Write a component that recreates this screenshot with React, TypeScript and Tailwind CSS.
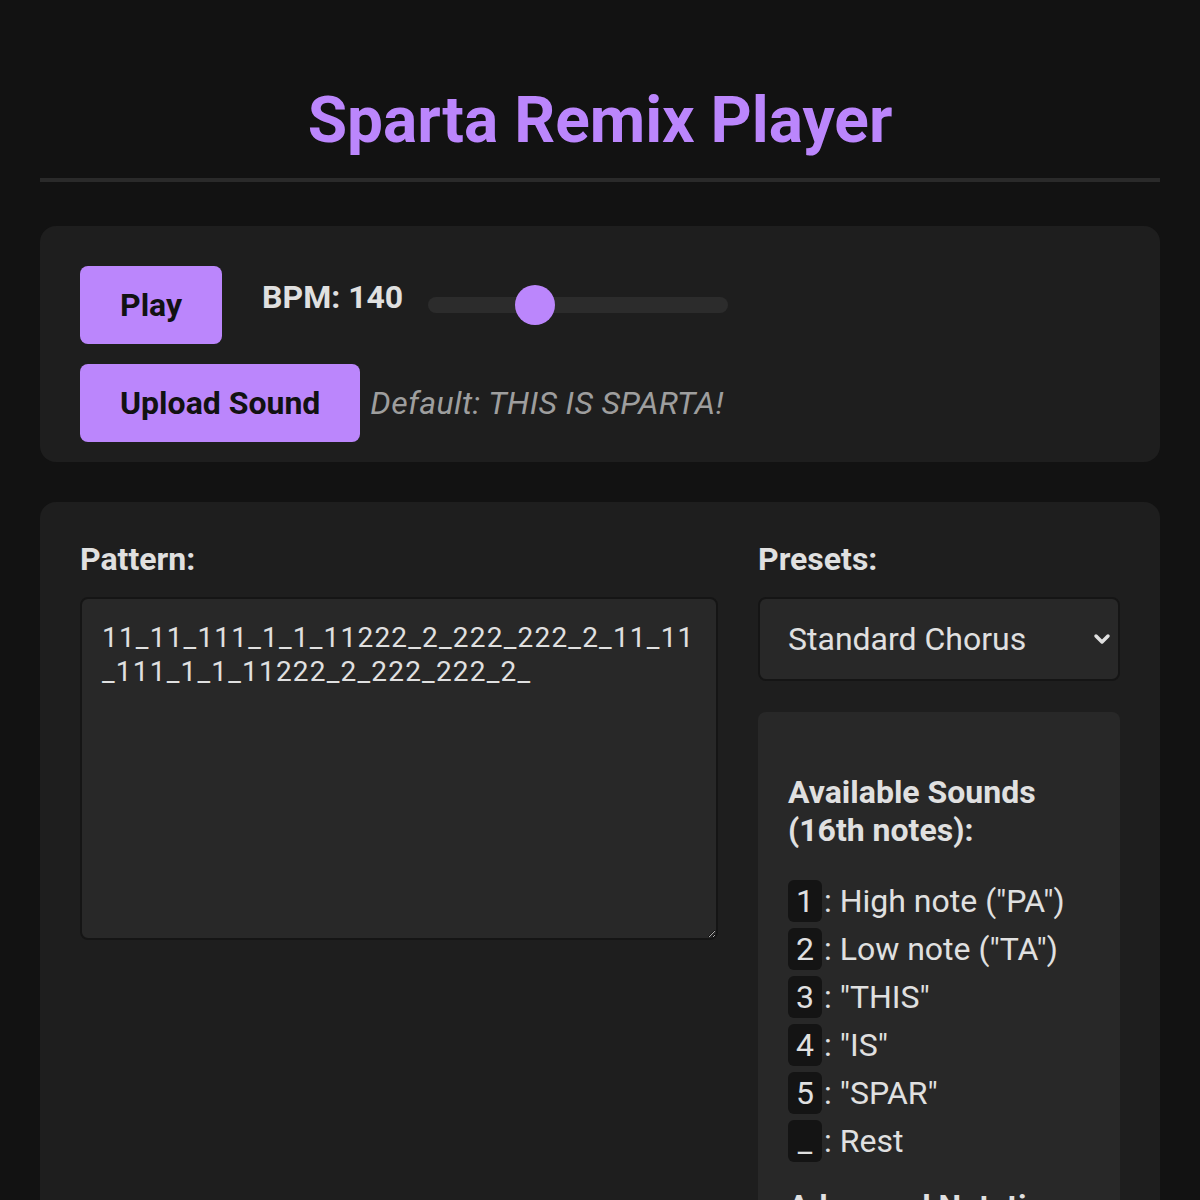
import { useState } from 'react';
import { ChevronDown } from 'lucide-react';

const presets = ['Standard Chorus', 'Classic Sparta', 'Double Time', 'Half Time'];

const sounds: [string, string][] = [
  ['1', 'High note ("PA")'],
  ['2', 'Low note ("TA")'],
  ['3', '"THIS"'],
  ['4', '"IS"'],
  ['5', '"SPAR"'],
  ['_', 'Rest'],
];

export default function App() {
  const [bpm, setBpm] = useState(140);
  const [pattern, setPattern] = useState(
    '11_11_111_1_1_11222_2_222_222_2_11_11_111_1_1_11222_2_222_222_2_'
  );
  const [preset, setPreset] = useState(presets[0]);

  return (
    <div className="min-h-screen bg-[#121212] text-[#e0e0e0] px-10 pb-10 font-['Roboto',sans-serif]">
      <h1 className="text-[64px] leading-[77px] font-bold text-center text-[#bb86fc] pt-[82px] pb-[19px] border-b-[4px] border-[#2a2a2a]">
        Sparta Remix Player
      </h1>

      <div className="mt-[44px] bg-[#1e1e1e] rounded-2xl px-10 pt-10 pb-5 flex flex-col gap-5">
        <div className="flex items-center">
          <button className="h-[78px] px-10 rounded-lg bg-[#bb86fc] text-[#121212] font-bold text-[32px]">
            Play
          </button>
          <span className="ml-10 mb-4 text-[32px] font-bold">BPM: {bpm}</span>
          <input
            type="range"
            min={60}
            max={300}
            value={bpm}
            onChange={(e) => setBpm(Number(e.target.value))}
            className="ml-[25px] w-[300px] h-4 rounded-full bg-[#2c2c2c] appearance-none outline-none [&::-webkit-slider-thumb]:appearance-none [&::-webkit-slider-thumb]:w-10 [&::-webkit-slider-thumb]:h-10 [&::-webkit-slider-thumb]:rounded-full [&::-webkit-slider-thumb]:bg-[#bb86fc] [&::-webkit-slider-thumb]:border-0"
          />
        </div>
        <div className="flex items-center">
          <button className="h-[78px] px-10 rounded-lg bg-[#bb86fc] text-[#121212] font-bold text-[32px]">
            Upload Sound
          </button>
          <span className="ml-[10px] text-[32px] tracking-[0.4px] italic text-[#9e9e9e]">Default: THIS IS SPARTA!</span>
        </div>
      </div>

      <div className="mt-10 bg-[#1e1e1e] rounded-2xl p-10 grid grid-cols-[1fr_362px] gap-10">
        <div>
          <label className="block text-[32px] leading-[35px] font-bold mb-5">Pattern:</label>
          <textarea
            value={pattern}
            onChange={(e) => setPattern(e.target.value)}
            className="w-full h-[343px] bg-[#282828] border-2 border-[#151515] rounded-lg px-5 pt-[22px] pb-5 text-[28px] leading-[34px] tracking-[1.2px] text-[#e0e0e0] font-['Roboto',sans-serif] outline-none break-all"
          />
        </div>

        <div>
          <label className="block text-[32px] leading-[35px] font-bold mb-5">Presets:</label>
          <div className="relative">
            <select
              value={preset}
              onChange={(e) => setPreset(e.target.value)}
              className="w-full h-[84px] appearance-none bg-[#282828] border-2 border-[#151515] rounded-lg pl-[28px] pr-12 text-[32px] text-[#e0e0e0] font-['Roboto',sans-serif] outline-none"
            >
              {presets.map((p) => (
                <option key={p}>{p}</option>
              ))}
            </select>
            <ChevronDown
              className="absolute right-[6px] top-1/2 -translate-y-1/2 w-6 h-6 text-[#e0e0e0] pointer-events-none"
              strokeWidth={3.5}
            />
          </div>

          <div className="mt-[31px] bg-[#282828] rounded-lg px-[30px] py-[30px]">
            <h3 className="mt-[31px] text-[32px] leading-[38px] font-bold">Available Sounds (16th notes):</h3>
            <ul className="mt-[28px]">
              {sounds.map(([k, label]) => (
                <li key={k} className="flex items-center h-[48px] text-[32px]">
                  <span className="inline-flex items-center justify-center h-[42px] w-[34px] rounded-md bg-[#141414]">{k}</span>
                  <span className="ml-[2px]">: {label}</span>
                </li>
              ))}
            </ul>
            <h3 className="mt-[22px] text-[32px] leading-[38px] font-bold">Advanced Notation:</h3>
            <p className="mt-4 text-[28px] text-[#bdbdbd]">Use numbers for sounds and _ for rests.</p>
          </div>
        </div>
      </div>
    </div>
  );
}
